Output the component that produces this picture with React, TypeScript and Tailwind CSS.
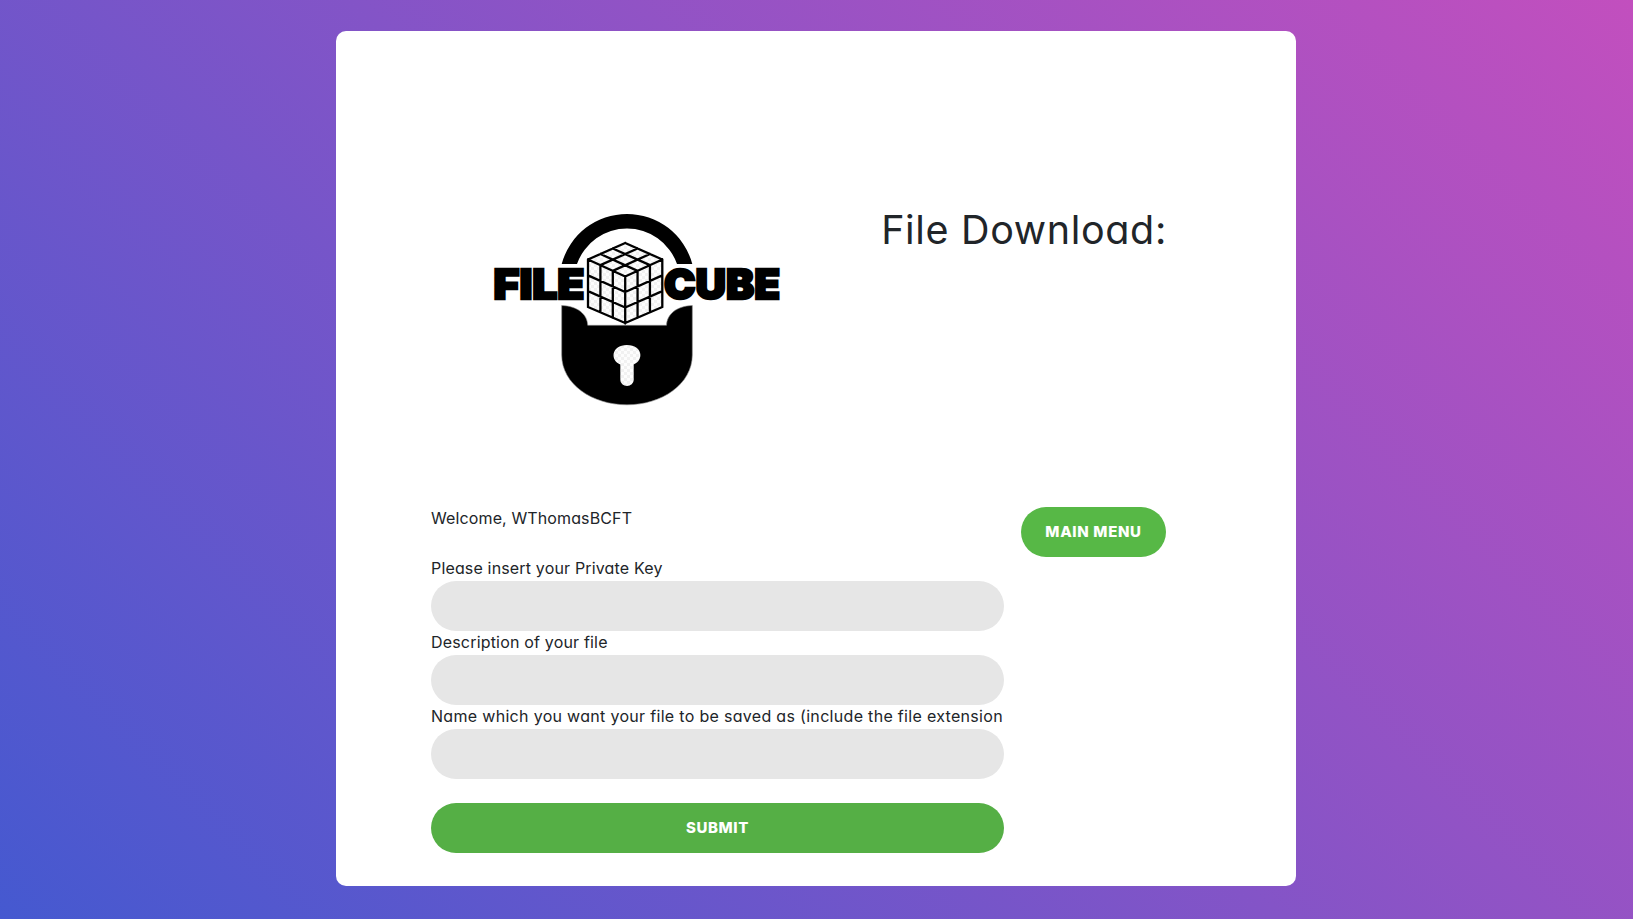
import React from "react";

type Point = [number, number];

function Logo() {
  const left: Point = [588, 259.5];
  const top: Point = [625.2, 243];
  const right: Point = [662.3, 259.5];
  const centre: Point = [625.2, 276.5];
  const mix = (a: Point, b: Point, t: number): Point => [a[0] + (b[0] - a[0]) * t, a[1] + (b[1] - a[1]) * t];
  const seg = (a: Point, b: Point) => `M${a[0]} ${a[1]}L${b[0]} ${b[1]}`;
  const down = (p: Point, h: number): Point => [p[0], p[1] + h];
  const lines: string[] = [];
  for (let i = 0; i <= 3; i++) {
    const t = i / 3;
    lines.push(seg(mix(left, top, t), mix(centre, right, t)));
    lines.push(seg(mix(left, centre, t), mix(top, right, t)));
    lines.push(seg(down(left, 47.5 * t), down(centre, 46.5 * t)));
    lines.push(seg(down(centre, 46.5 * t), down(right, 47.5 * t)));
    lines.push(seg(mix(left, centre, t), down(mix(left, centre, t), 47)));
    lines.push(seg(mix(centre, right, t), down(mix(centre, right, t), 47)));
  }
  return (
    <svg className="block overflow-visible" width="294" height="200" viewBox="490 210 294 200" aria-label="File Cube">
      <defs>
        <pattern id="checks" width="6" height="6" patternUnits="userSpaceOnUse">
          <rect width="6" height="6" fill="#fdfdfd" />
          <path d="M0 0H3V3H0ZM3 3H6V6H3Z" fill="#f1f1f1" />
        </pattern>
      </defs>
      <path d="M561.7 264A67.6 67.6 0 0 1 692.3 264H677A53 53 0 0 0 577 264Z" />
      <path
        d="M561.7 305.5C577 306 587.5 314 587.7 325.3H666.5C667 314 677 306 692.3 305.5V355C692.3 384 662 404.8 627 404.8S561.7 384 561.7 355Z"
        stroke="#8a8a8a"
        strokeWidth="0.6"
      />
      <path
        d="M620.3 364.5C610 360.5 611 345 627 345S644 360.5 633.7 364.5V380A6.7 6 0 0 1 620.3 380Z"
        fill="url(#checks)"
      />
      <path d="M588 259.5L625.2 243L662.3 259.5V307L625.2 323L588 307Z" fill="url(#checks)" />
      <path d={lines.join("")} stroke="#000" strokeWidth="2.3" strokeLinecap="round" fill="none" />
      <g fontFamily="Inter, sans-serif" fontWeight="900" fontSize="41" stroke="#000" strokeWidth="2.4">
        <text x="493.5" y="299.3" textLength="91" lengthAdjust="spacingAndGlyphs">FILE</text>
        <text x="664" y="299.3" textLength="116" lengthAdjust="spacingAndGlyphs">CUBE</text>
      </g>
    </svg>
  );
}

function Field({ label, tracking }: { label: string; tracking: string }) {
  return (
    <label className="block">
      <span className={`block h-6 whitespace-nowrap leading-[22px] ${tracking}`}>{label}</span>
      <input className="block h-[50px] w-full rounded-[25px] bg-[#e6e6e6] px-[30px] outline-none" />
    </label>
  );
}

export default function App() {
  return (
    <div className="flex h-[919px] items-start justify-center bg-[linear-gradient(-135deg,#c24fbe,#4559d0)] pt-[31px] pr-px font-['Inter',sans-serif] text-base text-[#212529] [font-feature-settings:'cv11']">
      <main className="h-[855px] w-[960px] rounded-[10px] bg-white pr-[130px] pl-[95px] pt-[177px]">
        <header className="flex h-[299px] items-start justify-between">
          <div className="ml-[59px] mt-[2px]">
            <Logo />
          </div>
          <h1 className="mr-[-1px] whitespace-nowrap text-[39.5px] font-normal leading-[44px] tracking-[0.65px]">File Download:</h1>
        </header>
        <div className="flex items-start justify-between">
          <form className="w-[573px]" onSubmit={(e) => e.preventDefault()}>
            <p className="mb-[26px] h-6 leading-[22px] tracking-[0.12px]">Welcome, WThomasBCFT</p>
            <Field label="Please insert your Private Key" tracking="tracking-[0.16px]" />
            <Field label="Description of your file" tracking="tracking-[0.18px]" />
            <Field
              label="Name which you want your file to be saved as (include the file extension"
              tracking="tracking-[0.31px]"
            />
            <button className="mt-6 block h-[50px] w-full rounded-[25px] bg-[#55af45] text-[15px] font-extrabold tracking-[0.6px] text-white">
              SUBMIT
            </button>
          </form>
          <button className="h-[50px] w-[145px] rounded-[25px] bg-[#57b846] text-[15px] font-extrabold tracking-[0.65px] text-white">
            MAIN MENU
          </button>
        </div>
      </main>
    </div>
  );
}
